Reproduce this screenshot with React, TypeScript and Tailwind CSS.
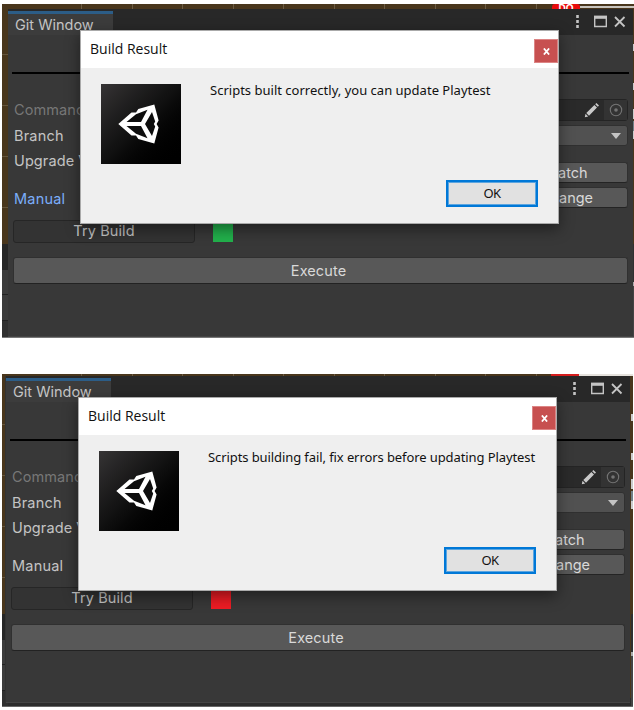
import React from 'react';

type ShotProps = { message: string; ok: boolean };

const SCENE_COLUMNS = [0, 1, 2, 3, 4, 5, 6, 7, 8, 9];
const SCENE_ROWS = [0, 1, 2, 3];

function EngineLogo() {
  return (
    <svg viewBox="0 0 80 80" className="block h-20 w-20">
      <path
        d="M17.3 40 30.5 28.4H35L37.3 25 53.3 20.6 57.6 36.5 55.6 40 57.6 43.5 53.3 59.4 37.3 55 35 51.6H30.5Z"
        fill="#fff"
      />
      <path d="M25.5 38 35 30.2 46.5 25.8 40 38ZM25.5 42 35 49.8 46.5 54.2 40 42ZM44 40 51 28 54.2 37.5 52.8 40 54.2 42.5 51 52Z" fill="#0d0d0d" />
    </svg>
  );
}

function Dialog({ message, ok }: ShotProps) {
  return (
    <div className="flex h-[194px] w-[479px] flex-col border border-[#aaa] bg-[#efefef] text-[#111] shadow-[0_5px_14px_rgba(0,0,0,0.45)]">
      <div className="flex h-[37px] shrink-0 justify-between bg-white pl-[9px] pt-[8px]">
        <span className="font-['Open_Sans',sans-serif] text-[14px] leading-[20px]">Build Result</span>
        <div className="flex h-6 w-6 items-center justify-center border border-[#dc8585] bg-[#c75050]">
          <svg viewBox="0 0 8 8" className="h-[7px] w-[7px]" stroke="#fff" strokeWidth="2">
            <path d="M1 .5 7 7.5M7 .5 1 7.5" />
          </svg>
        </div>
      </div>
      <div className="flex pl-[20px] pt-[16px]">
        <div className="h-20 w-20 bg-linear-to-br from-[#363435] via-[#101010] to-black">
          <EngineLogo />
        </div>
        <span
          className={
            ok
              ? "ml-[29px] -mt-[4px] whitespace-nowrap font-['Noto_Sans',sans-serif] text-[13px] leading-[20px] tracking-[0.01px]"
              : "ml-[29px] -mt-[4px] whitespace-nowrap font-['Noto_Sans',sans-serif] text-[13px] leading-[20px] tracking-[-0.09px]"
          }
        >
          {message}
        </span>
      </div>
      <div className="mt-[16px] flex justify-end pr-[20px]">
        <div className="flex h-[27px] w-[92px] items-center justify-center border-2 border-[#0078d7] bg-[#e1e1e1] font-['Noto_Sans',sans-serif] text-[13px] tracking-[-0.5px] outline-1 -outline-offset-3 outline-[#5ca5df]">
          OK
        </div>
      </div>
    </div>
  );
}

function WindowBar() {
  return (
    <div className="flex h-[26px] items-stretch justify-between bg-[#282828] pt-[2px]">
      <div className="h-6 w-[105px] border-t-[3px] border-[#2c5d87] bg-[#3c3c3c] pl-[7px] text-[14.5px] leading-[22px]">Git Window</div>
      <svg viewBox="0 0 56 22" className="mr-[4px] h-[22px] w-[56px]" fill="none" stroke="#c4c4c4">
        <path d="M4.5 4v3M4.5 9v3M4.5 14v3" strokeWidth="2.6" />
        <path d="M21.7 5.5H33.3V15.5H21.7Z" strokeWidth="1.4" />
        <path d="M21 6.3h13" strokeWidth="3" />
        <path d="M42 6 51.5 15.5M51.5 6 42 15.5" strokeWidth="1.8" />
      </svg>
    </div>
  );
}

function GitWindow({ ok }: { ok: boolean }) {
  return (
    <div
      className={
        ok
          ? "flex h-[328px] w-[625px] flex-col border-b border-[#444] bg-[#383838] font-['Inter',sans-serif] text-[14.5px] text-[#c4c4c4]"
          : "flex h-[327px] w-[624px] flex-col border-b border-[#444] bg-[#383838] font-['Inter',sans-serif] text-[14.5px] text-[#c4c4c4]"
      }
    >
      <WindowBar />
      <div className="ml-[4px] mr-[4px] mt-[37px] h-[2px] shrink-0 bg-black" />
      <div className="mt-[25px] flex h-[22px] shrink-0 items-center justify-between pl-[6px] pr-[5px]">
        <span className="text-[#777] tracking-[0.1px]">Command</span>
        <div className="flex h-[22px] w-[400px] items-center justify-end rounded-[3px] border border-[#242424] bg-[#2a2a2a]">
          <svg viewBox="0 0 16 16" className="mr-[4px] h-[16px] w-[16px]" fill="#c9c9c9">
            <path d="M.8 15.2 1.5 11.8 4.2 14.5ZM2.3 11 10.4 3 13 5.6 5 13.7ZM11.2 2.2 12.4 1 15 3.6 13.8 4.8Z" />
          </svg>
          <div className="flex h-full w-[23px] items-center justify-center bg-[#333]">
            <svg viewBox="0 0 14 14" className="h-[14px] w-[14px]" fill="none" stroke="#747474">
              <circle cx="7" cy="7" r="5.7" strokeWidth="1.1" />
              <circle cx="7" cy="7" r="1.8" fill="#747474" stroke="none" />
            </svg>
          </div>
        </div>
      </div>
      <div className="mt-[4px] flex h-[21px] shrink-0 items-center justify-between pl-[6px] pr-[5px]">
        <span className="tracking-[0.2px]">Branch</span>
        <div className="flex h-[21px] w-[400px] items-center justify-end rounded-[3px] border border-[#303030] bg-[#515151] pr-[6px]">
          <svg viewBox="0 0 10 6" className="h-[6px] w-[10px]" fill="#c4c4c4">
            <path d="M0 0H10L5 6Z" />
          </svg>
        </div>
      </div>
      <div className="flex h-[66px] shrink-0 justify-between pl-[6px] pr-[5px]">
        <div className="flex flex-col pt-[5px]">
          <span className="h-[38px] leading-[20px] tracking-[0.1px]">Upgrade V</span>
          <span className={ok ? 'leading-[20px] tracking-[0.2px] text-[#7baefa]' : 'leading-[20px] tracking-[0.2px]'}>Manual</span>
        </div>
        <div className="flex w-[116px] flex-col gap-[4px] pt-[16px]">
          <div className="h-[21px] rounded-[3px] border border-b-[#242424] border-[#303030] bg-[#585858] pl-[45px] leading-[19px] text-[#d9d9d9]">atch</div>
          <div className="h-[21px] rounded-[3px] border border-b-[#242424] border-[#303030] bg-[#585858] pl-[46px] leading-[19px] text-[#d9d9d9]">ange</div>
        </div>
      </div>
      <div className="mt-[8px] flex shrink-0 items-start pl-[5px]">
        <div className="h-[23px] w-[182px] rounded-[3px] border border-[#262626] bg-[#333] text-center leading-[20px] tracking-[0.1px]">Try Build</div>
        <div className={ok ? 'ml-[18px] mt-[1px] h-[21px] w-5 bg-[#22b14c]' : 'ml-[18px] mt-[1px] h-[21px] w-5 bg-[#ed1c24]'} />
      </div>
      <div className="ml-[5px] mr-[5px] mt-[14px] h-[27px] shrink-0 rounded-[3px] border border-[#303030] border-b-[#222] bg-[#585858] pr-[4px] text-center leading-[26px] tracking-[0.1px] text-[#d9d9d9]">
        Execute
      </div>
    </div>
  );
}

function SceneBehind({ ok }: { ok: boolean }) {
  return (
    <div className="absolute inset-0 flex justify-between bg-[#49361c]">
      <div className="w-[6px]">
        <div className="flex h-[240px] flex-col gap-[50px] pt-[50px]">
          {SCENE_ROWS.map((r) => (
            <div key={r} className="h-px shrink-0 bg-[#65553d]" />
          ))}
        </div>
        <div className="h-[26px] bg-[#262626]" />
        <div className="h-[25px] border-b border-[#222] bg-[#3c3c3c]" />
        <div className="h-[26px] border-b border-[#222] bg-[#3c3c3c]" />
        <div className="h-[20px] bg-[#303030]" />
      </div>
      <div className="flex flex-1 flex-col justify-between">
        <div className="flex gap-[49.5px] pl-[73px]">
          {SCENE_COLUMNS.map((c) => (
            <div key={c} className="h-[5px] w-px shrink-0 bg-[#6b5b43]" />
          ))}
        </div>
        <div className="h-[8px] bg-[#2c2c2c]" />
      </div>
      <div className="absolute right-0 top-0 flex h-[5px] w-[82px] items-start overflow-hidden">
        <div
          className={
            ok
              ? "h-[5px] w-[28px] overflow-hidden rounded-t-[3px] bg-[#e80c0c] text-center font-['Liberation_Sans',sans-serif] text-[10px] font-bold leading-[9px] text-white"
              : 'h-[2px] w-[28px] overflow-hidden bg-[#d51d1d]'
          }
        >
          {ok ? 'DO' : null}
        </div>
        <div className={ok ? 'mt-[2px] h-[2px] flex-1 bg-[#c9c5be]' : 'h-[2px] flex-1 bg-[#e5e2dd]'} />
      </div>
      <div className="w-[2px] pt-[40px]">
        <div className="h-[7px] bg-[#ccc]" />
        <div className="mt-[32px] h-[7px] bg-[#ccc]" />
        <div className="mt-[19px] h-[10px] bg-[#ccc]" />
        <div className="mt-[2px] h-[10px] bg-[#718087]" />
        <div className="h-[8px] bg-[#ccc]" />
        <div className="mt-[105px] h-[38px] bg-[#303030]" />
        <div className="h-[4px] bg-[#aaa]" />
        <div className="h-[60px] bg-[#444]" />
      </div>
    </div>
  );
}

function Shot({ message, ok }: ShotProps) {
  return (
    <section
      className={
        ok
          ? 'relative ml-[2px] h-[334px] w-[632px] overflow-hidden border-b border-[#777] pl-[6px] pt-[5px]'
          : 'relative ml-[2px] h-[333px] w-[631px] overflow-hidden border-b border-[#666] pl-[3px] pt-[2px]'
      }
    >
      <SceneBehind ok={ok} />
      <div className={ok ? 'relative w-[625px]' : 'relative w-[625px] border-l border-[#333]'}>
        <GitWindow ok={ok} />
        <div className={ok ? 'absolute left-[72px] top-[21px]' : 'absolute left-[72px] top-[21px]'}>
          <Dialog message={message} ok={ok} />
        </div>
      </div>
    </section>
  );
}

export default function App() {
  return (
    <main className="flex h-[710px] w-[634px] flex-col gap-[36px] overflow-hidden bg-white pt-[4px]">
      <Shot ok message="Scripts built correctly, you can update Playtest" />
      <Shot ok={false} message="Scripts building fail, fix errors before updating Playtest" />
    </main>
  );
}
